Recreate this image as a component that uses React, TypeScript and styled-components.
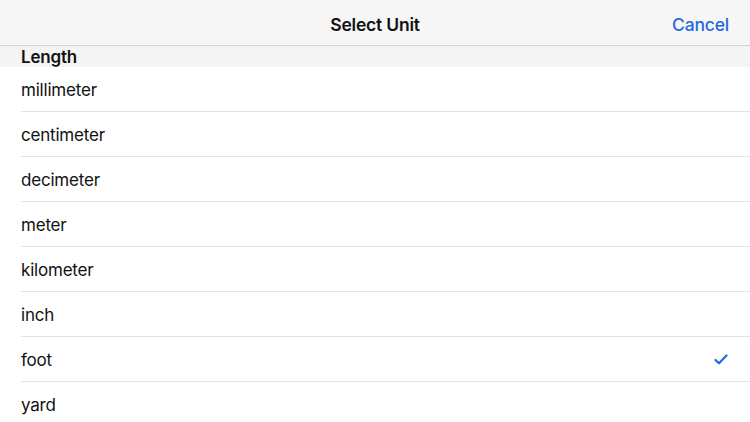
import React from "react";
import styled, { createGlobalStyle } from "styled-components";

const Global = createGlobalStyle`
  html, body { margin: 0; padding: 0; background: #ffffff; }
  body { font-family: Inter, "Liberation Sans", sans-serif; -webkit-font-smoothing: antialiased; }
`;

const Screen = styled.div`
  width: 750px;
  height: 422px;
  overflow: hidden;
  background: #ffffff;
  display: flex;
  flex-direction: column;
`;

const NavBar = styled.header`
  height: 46px;
  flex: 0 0 46px;
  background: #f6f6f6;
  border-bottom: 1px solid #d4d4d4;
  display: grid;
  grid-template-columns: 1fr auto 1fr;
  align-items: center;
  padding: 3px 21px 0;
  box-sizing: border-box;
`;

const Title = styled.div`
  grid-column: 2;
  font-size: 17.5px;
  font-weight: 600;
  color: #111111;
  letter-spacing: -0.2px;
`;

const CancelButton = styled.button`
  grid-column: 3;
  justify-self: end;
  background: none;
  border: none;
  padding: 0;
  font-family: inherit;
  font-size: 17.5px;
  font-weight: 500;
  color: #1f69de;
  letter-spacing: -0.2px;
  cursor: pointer;
`;

const SectionHeader = styled.div`
  height: 21px;
  flex: 0 0 21px;
  background: #f4f4f4;
  padding: 1px 21px 0;
  display: flex;
  align-items: center;
  font-size: 17px;
  font-weight: 600;
  color: #111111;
  letter-spacing: -0.2px;
  box-sizing: border-box;
`;

const List = styled.ul`
  list-style: none;
  margin: 0;
  padding: 0 0 0 21px;
`;

const Row = styled.li<{ $last?: boolean }>`
  height: 45px;
  display: flex;
  align-items: center;
  justify-content: space-between;
  padding: 1px 22px 0 0;
  box-sizing: border-box;
  border-bottom: ${(p) => (p.$last ? "none" : "1px solid #e3e3e3")};
  font-size: 17px;
  color: #111111;
  letter-spacing: -0.2px;
`;

const Check = styled.svg`
  width: 14px;
  height: 11px;
`;

const units = [
  "millimeter",
  "centimeter",
  "decimeter",
  "meter",
  "kilometer",
  "inch",
  "foot",
  "yard",
];

export default function App() {
  return (
    <Screen>
      <Global />
      <NavBar>
        <Title>Select Unit</Title>
        <CancelButton>Cancel</CancelButton>
      </NavBar>
      <SectionHeader>Length</SectionHeader>
      <List>
        {units.map((u, i) => (
          <Row key={u} $last={i === units.length - 1}>
            <span>{u}</span>
            {u === "foot" && (
              <Check viewBox="0 0 14 11">
                <path
                  d="M1.5 6 L5 9.3 L12.5 1.5"
                  fill="none"
                  stroke="#1f69de"
                  strokeWidth="2.2"
                  strokeLinecap="round"
                  strokeLinejoin="round"
                />
              </Check>
            )}
          </Row>
        ))}
      </List>
    </Screen>
  );
}
